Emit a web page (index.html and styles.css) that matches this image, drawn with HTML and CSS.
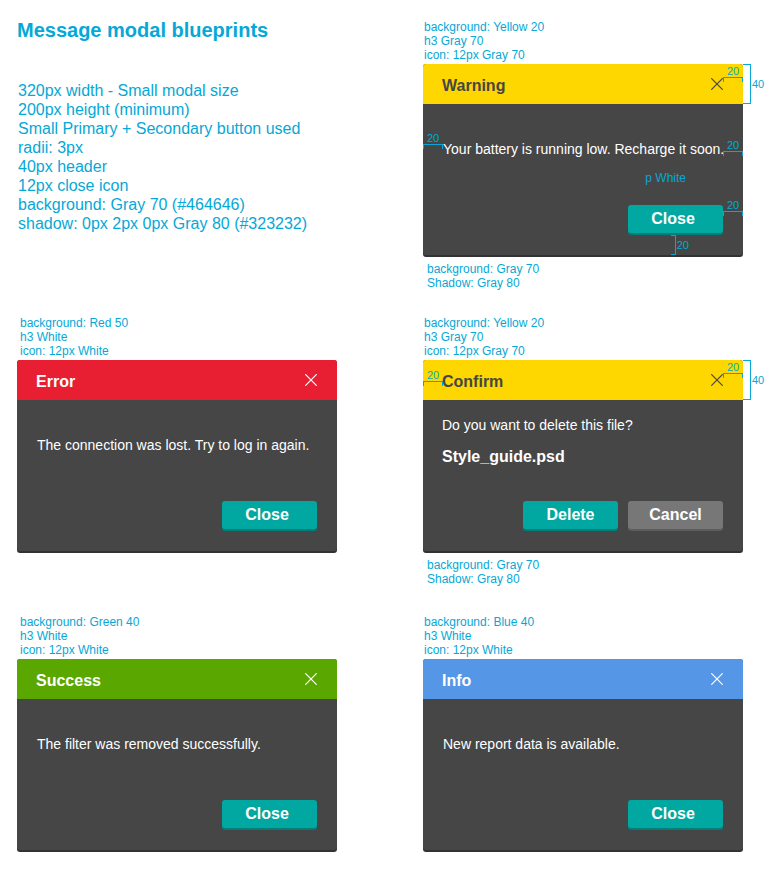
FILE: index.html
```html
<!DOCTYPE html>
<html lang="en">
<head>
<meta charset="utf-8">
<meta name="viewport" content="width=device-width, initial-scale=1">
<title>Message modal blueprints</title>
<link rel="stylesheet" href="styles.css">
</head>
<body>
<svg class="sprite" aria-hidden="true">
  <symbol id="close" viewBox="0 0 12 12"><path d="M0.3 0.3 11.7 11.7M11.7 0.3 0.3 11.7"/></symbol>
</svg>
<main class="sheet">
  <section class="intro">
    <h1 class="intro-title">Message modal blueprints</h1>
    <ul class="specs">
      <li>320px width - Small modal size</li>
      <li>200px height (minimum)</li>
      <li>Small Primary + Secondary button used</li>
      <li>radii: 3px</li>
      <li>40px header</li>
      <li>12px close icon</li>
      <li>background: Gray 70 (#464646)</li>
      <li>shadow: 0px 2px 0px Gray 80 (#323232)</li>
    </ul>
  </section>

  <section class="sample">
    <p class="note">background: Yellow 20<br>h3 Gray 70<br>icon: 12px Gray 70</p>
    <article class="modal modal--warning">
      <header class="modal-header">
        <h3 class="modal-title">Warning</h3>
        <button class="modal-close" type="button" aria-label="Close"><svg class="icon"><use href="#close"/></svg></button>
      </header>
      <div class="modal-body"><p class="message">Your battery is running low. Recharge it soon.</p></div>
      <footer class="modal-actions"><button class="button button--close" type="button">Close</button></footer>
      <span class="ruler ruler--end ruler--icon">20</span>
      <span class="ruler ruler--start ruler--text">20</span>
      <span class="ruler ruler--end ruler--text-end">20</span>
      <span class="ruler ruler--end ruler--button">20</span>
      <span class="bracket bracket--header">40</span>
      <span class="bracket bracket--bottom">20</span>
      <span class="text-note">p White</span>
    </article>
    <p class="note note--below">background: Gray 70<br>Shadow: Gray 80</p>
  </section>

  <section class="sample sample--left">
    <p class="note">background: Red 50<br>h3 White<br>icon: 12px White</p>
    <article class="modal modal--error">
      <header class="modal-header">
        <h3 class="modal-title">Error</h3>
        <button class="modal-close" type="button" aria-label="Close"><svg class="icon"><use href="#close"/></svg></button>
      </header>
      <div class="modal-body"><p class="message">The connection was lost. Try to log in again.</p></div>
      <footer class="modal-actions"><button class="button button--close" type="button">Close</button></footer>
    </article>
  </section>

  <section class="sample">
    <p class="note">background: Yellow 20<br>h3 Gray 70<br>icon: 12px Gray 70</p>
    <article class="modal modal--warning">
      <header class="modal-header">
        <h3 class="modal-title">Confirm</h3>
        <button class="modal-close" type="button" aria-label="Close"><svg class="icon"><use href="#close"/></svg></button>
      </header>
      <div class="modal-body modal-body--confirm">
        <p class="message">Do you want to delete this file?</p>
        <p class="file-name">Style_guide.psd</p>
      </div>
      <footer class="modal-actions">
        <button class="button" type="button">Delete</button>
        <button class="button button--secondary" type="button">Cancel</button>
      </footer>
      <span class="ruler ruler--end ruler--icon">20</span>
      <span class="ruler ruler--start ruler--title">20</span>
      <span class="bracket bracket--header">40</span>
    </article>
    <p class="note note--below">background: Gray 70<br>Shadow: Gray 80</p>
  </section>

  <section class="sample sample--left">
    <p class="note">background: Green 40<br>h3 White<br>icon: 12px White</p>
    <article class="modal modal--success">
      <header class="modal-header">
        <h3 class="modal-title">Success</h3>
        <button class="modal-close" type="button" aria-label="Close"><svg class="icon"><use href="#close"/></svg></button>
      </header>
      <div class="modal-body"><p class="message">The filter was removed successfully.</p></div>
      <footer class="modal-actions"><button class="button button--close" type="button">Close</button></footer>
    </article>
  </section>

  <section class="sample">
    <p class="note">background: Blue 40<br>h3 White<br>icon: 12px White</p>
    <article class="modal modal--info">
      <header class="modal-header">
        <h3 class="modal-title">Info</h3>
        <button class="modal-close" type="button" aria-label="Close"><svg class="icon"><use href="#close"/></svg></button>
      </header>
      <div class="modal-body"><p class="message">New report data is available.</p></div>
      <footer class="modal-actions"><button class="button button--close" type="button">Close</button></footer>
    </article>
  </section>
</main>
</body>
</html>
```
FILE: styles.css
```css
* { box-sizing: border-box; }

:root {
  --blueprint: #05a8d6;
  --gray-70: #464646;
  --gray-80: #323232;
}

body {
  margin: 0;
  background: #fff;
  color: var(--blueprint);
  font-family: "Liberation Sans", Arial, sans-serif;
}

h1, h3, p, ul { margin: 0; padding: 0; }

.sprite { display: none; }

.sheet {
  display: grid;
  grid-template-columns: repeat(2, minmax(0, 320px));
  grid-template-rows: minmax(296px, auto) minmax(299px, auto) auto;
  justify-content: space-between;
  padding: 20px 30px 20px 17px;
}

.intro-title {
  font-size: 20px;
  line-height: 20px;
}

.specs {
  padding-top: 41px;
  padding-left: 1px;
  list-style: none;
  font-size: 16px;
  line-height: 19px;
}

.note {
  padding: 0 0 2px 1px;
  font-size: 12px;
  line-height: 14px;
}

.sample--left .note { padding-left: 3px; }

.note--below { padding: 7px 0 0 4px; }

.modal {
  position: relative;
  display: flex;
  flex-direction: column;
  min-height: 191px;
  border-radius: 3px;
  background: var(--gray-70);
  box-shadow: 0 2px 0 var(--gray-80);
  color: #fff;
}

.modal-header {
  display: flex;
  align-items: center;
  justify-content: space-between;
  height: 40px;
  padding: 0 20px 0 19px;
  border-radius: 3px 3px 0 0;
}

.modal--warning .modal-header { background: #fed600; color: var(--gray-70); }
.modal--error .modal-header { background: #e81e32; }
.modal--success .modal-header { background: #5aa700; }
.modal--info .modal-header { background: #5596e6; }

.modal-title {
  padding-top: 4px;
  font-size: 16px;
  line-height: 20px;
}

.modal-close {
  display: flex;
  padding: 0;
  border: 0;
  background: none;
  color: inherit;
  cursor: pointer;
}

.icon {
  width: 12px;
  height: 12px;
  overflow: visible;
  fill: none;
  stroke: currentColor;
  stroke-width: 1.2;
}

.modal-body {
  flex: 1;
  padding: 35px 0 0 20px;
}

.modal-body--confirm { padding: 15px 19px 0; }

.message {
  font-size: 14px;
  line-height: 20px;
}

.file-name {
  padding-top: 12px;
  font-size: 16px;
  font-weight: bold;
  line-height: 20px;
}

.modal-actions {
  display: flex;
  justify-content: flex-end;
  gap: 10px;
  padding: 0 20px 22px;
}

.button {
  width: 95px;
  height: 28px;
  padding: 0;
  border: 0;
  border-radius: 3px;
  background: #00a8a1;
  box-shadow: 0 2px 0 #007f7a;
  color: #fff;
  font: bold 16px/28px "Liberation Sans", Arial, sans-serif;
  cursor: pointer;
}

.button--close { padding-right: 5px; }

.button--secondary {
  background: #777;
  box-shadow: 0 2px 0 #5c5c5c;
}

/* Measurement marks laid over the modals */
.ruler,
.bracket,
.text-note {
  position: absolute;
  color: var(--blueprint);
}

.ruler,
.bracket {
  font-size: 11px;
  line-height: 11px;
}

.ruler {
  width: 20px;
  text-align: center;
}

.ruler::after {
  content: "";
  display: block;
  height: 4px;
  border: 1px solid;
  border-bottom: 0;
}

.ruler--start { left: 0; }
.ruler--end { right: 0; }
.ruler--icon { top: 2px; }
.ruler--title { top: 10px; }
.ruler--text { top: 69px; }
.ruler--text-end { top: 76px; }
.ruler--button { top: 136px; }

.bracket {
  display: flex;
  align-items: center;
  gap: 1px;
}

.bracket::before {
  content: "";
  align-self: stretch;
  border: 1px solid;
  border-left: 0;
}

.bracket--header { top: 0; left: 100%; height: 40px; }
.bracket--header::before { width: 7px; }
.bracket--bottom { right: 54px; bottom: 0; height: 20px; }
.bracket--bottom::before { width: 4px; }

.text-note {
  right: 57px;
  top: 107px;
  font-size: 12px;
  line-height: 14px;
}
```
